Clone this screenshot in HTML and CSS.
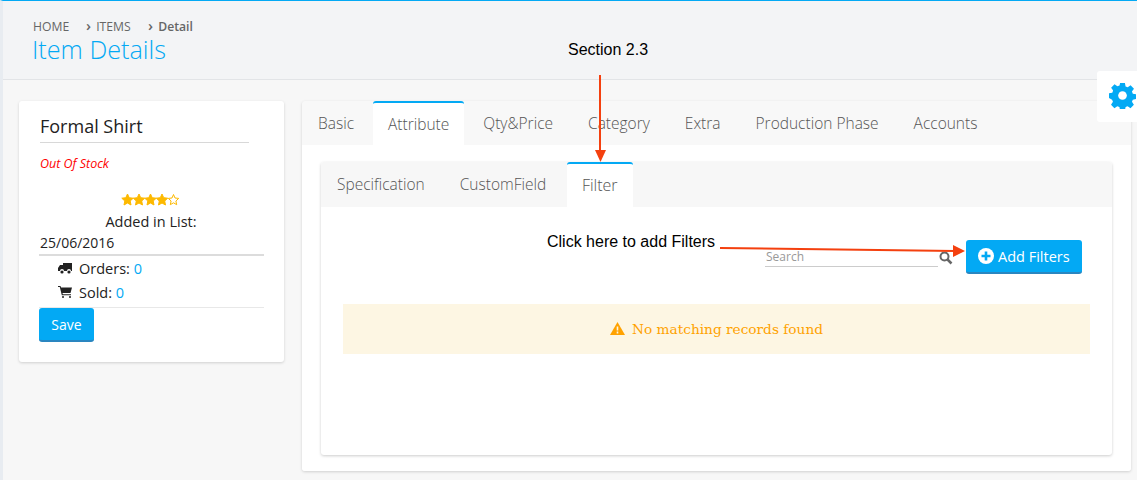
FILE: index.html
```html
<!DOCTYPE html>
<html>
<head>
    <title>Item Details</title>
    <link rel="stylesheet" href="styles.css">
</head>
<body>
    <div class="page">
        <div class="page-head">
            <div class="crumbs">
                <span class="crumb-home">HOME</span>
                <span class="crumb-items"><i class="sep">&#8250;</i> ITEMS</span>
                <span class="crumb-detail"><i class="sep">&#8250;</i> Detail</span>
            </div>
            <h1>Item Details</h1>
        </div>

        <div class="content">
            <div class="card side">
                <h2>Formal Shirt</h2>
                <div class="stock">Out Of Stock</div>
                <div class="stars">
                    <svg width="58" height="14" viewBox="0 0 58 14">
                        <path id="star" d="M6.5 1l1.7 3.700 4 .5-3 2.800.8 4-3.500-2-3.500 2 .8-4-3-2.800 4-.5z" fill="#fdb900" stroke="#fdb900"/>
                        <use href="#star" x="11.500"/>
                        <use href="#star" x="23"/>
                        <use href="#star" x="34.500"/>
                        <path d="M52.500 1.500l1.500 3.500 3.700.4-2.800 2.600.8 3.700-3.200-1.900-3.200 1.900.8-3.700-2.800-2.600 3.700-.4z" fill="#fff" stroke="#fdb900"/>
                    </svg>
                </div>
                <div class="added">Added in List:</div>
                <div class="date">25/06/2016</div>
                <div class="stat">
                    <svg width="14" height="12" viewBox="0 0 14 12"><path d="M5 1h9v8h-1a2 2 0 0 0-4 0H6a2 2 0 0 0-4 0H0V6l2-3h3z" fill="#222"/><circle cx="4" cy="10" r="1.600" fill="#222"/><circle cx="11" cy="10" r="1.600" fill="#222"/></svg>
                    <span>Orders: <b>0</b></span>
                </div>
                <div class="stat">
                    <svg width="14" height="12" viewBox="0 0 14 12"><path d="M0 0h2.500l.5 1.500h11l-1.500 5.500H4.500l.3 1.200H13v1H3.800L1.800 1H0z" fill="#222"/><circle cx="5" cy="11" r="1" fill="#222"/><circle cx="12" cy="11" r="1" fill="#222"/></svg>
                    <span>Sold: <b>0</b></span>
                </div>
                <div class="save-row"><button class="btn save">Save</button></div>
            </div>

            <div class="card main">
                <div class="tabs">
                    <a>Basic</a>
                    <a class="active">Attribute</a>
                    <a>Qty&amp;Price</a>
                    <a>Category</a>
                    <a>Extra</a>
                    <a>Production Phase</a>
                    <a>Accounts</a>
                </div>
                <div class="tab-body">
                    <div class="inner">
                        <div class="tabs sub">
                            <a>Specification</a>
                            <a>CustomField</a>
                            <a class="active">Filter</a>
                        </div>
                        <div class="inner-body">
                            <div class="tools">
                                <div class="search">
                                    <span class="search-box">Search</span>
                                    <svg width="14" height="14" viewBox="0 0 14 14"><circle cx="5.500" cy="5.500" r="4" fill="none" stroke="#666" stroke-width="2"/><path d="M8.500 8.500l4 4" stroke="#666" stroke-width="2.500"/></svg>
                                </div>
                                <button class="btn add">
                                    <svg width="16" height="16" viewBox="0 0 16 16"><circle cx="8" cy="8" r="8" fill="#fff"/><path d="M8 3.500v9M3.500 8h9" stroke="#03a9f4" stroke-width="2.600"/></svg>
                                    Add Filters
                                </button>
                            </div>
                            <div class="alert">
                                <svg width="15" height="13" viewBox="0 0 15 13"><path d="M7.500 0L15 13H0z" fill="#ffa200"/><path d="M7.500 4.500v4M7.500 9.500v2" stroke="#fdf6e3" stroke-width="1.600"/></svg>
                                No matching records found
                            </div>
                        </div>
                    </div>
                </div>
            </div>
        </div>

        <div class="settings">
            <svg width="27" height="27" viewBox="0 0 28 28"><path d="M11.500 1h5l.7 3.600 2.200.9 3-2.100 3.500 3.500-2.100 3 .9 2.200 3.300.6v5l-3.300.7-.9 2.200 2 3-3.500 3.500-3-2-2.100.9-.7 3.500h-5l-.7-3.500-2.200-.9-3 2-3.500-3.500 2-3-.9-2.200L0 16.700v-5l3.400-.6.900-2.200-2.100-3 3.500-3.500 3 2.100 2.200-.9z" fill="#03a9f4"/><circle cx="14" cy="14" r="4.500" fill="#fff"/></svg>
        </div>

        <span class="note note-section">Section 2.3</span>
        <span class="note note-click">Click here to add Filters</span>
        <svg class="arrows" width="1137" height="480" viewBox="0 0 1137 480">
            <path d="M600 75V152" stroke="#f4400f" stroke-width="2"/>
            <path d="M595 150h11l-5.500 12z" fill="#f4400f"/>
            <path d="M720 248L955 251" stroke="#f4400f" stroke-width="2"/>
            <path d="M953 245l12 6-12 6z" fill="#f4400f"/>
        </svg>
    </div>
</body>
</html>
```

FILE: styles.css
```css
* {
    box-sizing: border-box;
}
body {
    margin: 0;
    font-family: "Open Sans", sans-serif;
    font-size: 14px;
    color: #222;
    background-color: #f7f7f7;
}
.page {
    position: relative;
    height: 480px;
    overflow: hidden;
    border-top: 1px solid #03a9f4;
    border-left: 3px solid #e8ecf1;
}
.page-head {
    height: 79px;
    padding: 17px 0 0 30px;
    background-color: #f3f4f6;
    border-bottom: 1px solid #e2e4e7;
}
.crumbs {
    display: flex;
    font-size: 12.200px;
    line-height: 17px;
    color: #666;
}
.crumb-home {
    width: 53px;
}
.crumb-items {
    width: 62px;
}
.crumb-detail {
    font-weight: 600;
}
.sep {
    font-style: normal;
    font-weight: 600;
    font-size: 15px;
    line-height: 12px;
    margin-right: 2px;
}
h1 {
    margin: 0 0 0 -1px;
    font-size: 25.200px;
    font-weight: 300;
    line-height: 28px;
    color: #03a9f4;
}
.content {
    display: flex;
    align-items: flex-start;
    gap: 18px;
    padding: 21px 6px 0 16px;
}
.card {
    background-color: white;
    border-radius: 3px;
    box-shadow: 0 1px 3px rgba(0,0,0,0.16);
}
.side {
    width: 265px;
    height: 261px;
    padding: 12px 20px 0;
    flex-shrink: 0;
}
h2 {
    margin: 0 15px 0 1px;
    padding-bottom: 2px;
    font-size: 18px;
    font-weight: 400;
    line-height: 27px;
    border-bottom: 1px solid #d8d8d8;
}
.stock {
    margin: 12px 0 0 1px;
    font-size: 12.500px;
    font-style: italic;
    line-height: 17px;
    color: #f00;
}
.stars {
    margin-top: 20px;
    padding-right: 3px;
    height: 18px;
    text-align: center;
}
.added {
    text-align: center;
    font-size: 14.500px;
    line-height: 20px;
    margin-top: 2px;
    padding-right: 1px;
}
.date {
    padding: 1px 0 1px 1px;
    line-height: 20px;
    border-bottom: 2px solid #dcdcdc;
}
.stat {
    display: flex;
    align-items: center;
    gap: 7px;
    height: 24px;
    padding-left: 19px;
    font-size: 14.500px;
}
.stat b {
    font-weight: 400;
    color: #03a9f4;
}
.save-row {
    margin-top: 3px;
    border-top: 1px solid #e8e8e8;
}
.btn {
    border: 0;
    border-bottom: 2px solid #2a86c0;
    border-radius: 3px;
    color: white;
    background-color: #03a9f4;
    font-family: "Open Sans", sans-serif;
    font-size: 14px;
}
.save {
    width: 55px;
    height: 34px;
    display: block;
}
.main {
    width: 829px;
    height: 370px;
    background-color: #f8f8f8;
    overflow: hidden;
}
.tabs {
    display: flex;
    height: 44px;
    font-size: 15.500px;
    font-weight: 300;
    color: #555;
}
.tabs a {
    padding: 0 17.500px;
    line-height: 44px;
}
.tabs a:first-child {
    padding: 0 19px 0 16px;
}
.tabs .active {
    background-color: white;
    border-top: 2px solid #03a9f4;
    border-radius: 3px 3px 0 0;
    padding: 0 15px;
    line-height: 42px;
}
.tabs a:nth-child(3) {
    padding-left: 19px;
}
.tab-body {
    height: 326px;
    padding: 17px 19px 16px;
    background-color: white;
}
.inner {
    height: 293px;
    border-radius: 3px;
    box-shadow: 0 1px 3px rgba(0,0,0,0.2);
    overflow: hidden;
}
.sub {
    background-color: #f7f7f7;
    height: 45px;
}
.sub a {
    padding: 0 17.500px;
    line-height: 45px;
}
.sub a:first-child {
    padding: 0 17.500px 0 16px;
}
.sub .active {
    width: 66px;
    margin-left: 3px;
    padding: 0;
    font-size: 16px;
    line-height: 42px;
    text-align: center;
}
.sub a:nth-child(3) {
    padding-left: 0;
}
.inner-body {
    padding: 33px 22px 0;
}
.tools {
    display: flex;
    justify-content: flex-end;
    gap: 13px;
    padding-right: 8px;
}
.search {
    display: flex;
    align-items: flex-start;
    gap: 1px;
    padding-top: 7px;
}
.search-box {
    width: 173px;
    height: 20px;
    padding-left: 1px;
    font-size: 12px;
    line-height: 20px;
    color: #999;
    border-bottom: 1px solid #ccc;
}
.search svg {
    margin-top: 4px;
}
.add {
    display: flex;
    align-items: center;
    gap: 4px;
    width: 116px;
    height: 34px;
    padding-left: 12px;
    font-size: 14.500px;
}
.alert {
    display: flex;
    justify-content: center;
    align-items: center;
    gap: 7px;
    height: 50px;
    margin-top: 30px;
    padding-bottom: 1px;
    font-family: "DejaVu Serif", serif;
    font-size: 13.700px;
    color: #ffa200;
    background-color: #fdf6e3;
}
.settings {
    position: absolute;
    top: 70px;
    right: 0;
    width: 40px;
    height: 51px;
    padding: 11px 0 0 12px;
    background-color: white;
    border-radius: 3px 0 0 3px;
    overflow: hidden;
}
.note {
    position: absolute;
    font-family: "Liberation Sans", sans-serif;
    font-size: 16px;
    line-height: 18px;
    color: black;
}
.note-section {
    left: 565px;
    top: 40px;
}
.note-click {
    left: 544px;
    top: 232px;
}
.arrows {
    position: absolute;
    left: -3px;
    top: -1px;
    pointer-events: none;
}
```
